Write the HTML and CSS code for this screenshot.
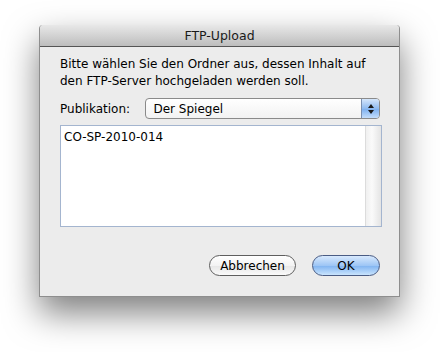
FILE: index.html
```html
<!DOCTYPE html>
<html lang="de">
<head>
    <meta charset="UTF-8">
    <title>FTP-Upload</title>
    <link rel="stylesheet" href="styles.css">
</head>
<body>
    <section class="dialog">
        <header class="title-bar">FTP-Upload</header>
        <div class="dialog-body">
            <p class="message">Bitte wählen Sie den Ordner aus, dessen Inhalt auf den FTP-Server hochgeladen werden soll.</p>
            <div class="field-row">
                <label class="field-label" for="publication">Publikation:</label>
                <div class="popup" id="publication">
                    <span class="popup-value">Der Spiegel</span>
                    <span class="popup-arrows">
                        <svg width="8" height="12" viewBox="0 0 8 12">
                            <path d="M4 1 L7 5 L1 5 Z" fill="#1a1a1a"/>
                            <path d="M4 11 L7 7 L1 7 Z" fill="#1a1a1a"/>
                        </svg>
                    </span>
                </div>
            </div>
            <div class="list-box">
                <ul class="folder-list">
                    <li class="folder-item">CO-SP-2010-014</li>
                </ul>
                <div class="scroll-track"></div>
            </div>
            <div class="button-row">
                <button class="push-button" type="button">Abbrechen</button>
                <button class="push-button default-button" type="button">OK</button>
            </div>
        </div>
    </section>
</body>
</html>
```

FILE: styles.css
```css
* {
    margin: 0;
    padding: 0;
    box-sizing: border-box;
}
body {
    background-color: #ffffff;
    font-family: "Lucida Grande", "DejaVu Sans", sans-serif;
    font-size: 12px;
    color: #000;
    padding: 25px 0 0 39px;
    width: 440px;
    height: 352px;
    overflow: hidden;
}
.dialog {
    width: 361px;
    height: 272px;
    background-color: #ececec;
    border: solid 1px #8e8e8e;
    border-top: none;
    border-radius: 4px 4px 0 0;
    box-shadow: 0 16px 34px rgba(0, 0, 0, 0.5);
}
.title-bar {
    height: 22px;
    line-height: 21px;
    text-align: center;
    font-size: 12.5px;
    color: #1a1a1a;
    border-radius: 4px 4px 0 0;
    background: linear-gradient(#e8e8e8, #bdbdbd);
    border-bottom: solid 1px #555;
}
.dialog-body {
    padding: 9px 19px 0 20px;
}
.message {
    line-height: 17px;
    width: 322px;
}
.field-row {
    display: flex;
    align-items: center;
    margin-top: 8px;
}
.field-label {
    width: 86px;
}
.popup {
    display: flex;
    align-items: center;
    width: 236px;
    height: 21px;
    border: solid 1px #8a8a8a;
    border-radius: 4px;
    background: linear-gradient(#ffffff, #f2f2f2);
    overflow: hidden;
}
.popup-value {
    flex: 1;
    padding-left: 7px;
}
.popup-arrows {
    display: flex;
    align-items: center;
    justify-content: center;
    width: 18px;
    height: 100%;
    background: linear-gradient(#d5e6fb, #8fbaf0 50%, #7aaeef 51%, #c3ddfb);
    border-left: solid 1px #7a8fb0;
}
.list-box {
    display: flex;
    margin-top: 6px;
    width: 322px;
    height: 102px;
    border: solid 1px #a4b5cf;
    background-color: #fff;
}
.folder-list {
    flex: 1;
    list-style: none;
    padding: 4px 3px;
}
.scroll-track {
    width: 16px;
    background: linear-gradient(90deg, #f0f0f0, #fafafa 40%, #e4e4e4);
    border-left: solid 1px #dcdcdc;
}
.button-row {
    display: flex;
    justify-content: flex-end;
    gap: 16px;
    margin-top: 28px;
}
.push-button {
    font-family: inherit;
    font-size: 12px;
    height: 21px;
    min-width: 87px;
    padding: 0 10px;
    border: solid 1px #5e5e5e;
    border-radius: 11px;
    background: linear-gradient(#ffffff, #f3f3f3 50%, #e6e6e6 51%, #fafafa);
    color: #000;
}
.default-button {
    min-width: 68px;
    border-color: #4a5c84;
    background: linear-gradient(#d8e9fd, #9ec6f5 50%, #7fb3f1 51%, #c9e4fd);
}
```
